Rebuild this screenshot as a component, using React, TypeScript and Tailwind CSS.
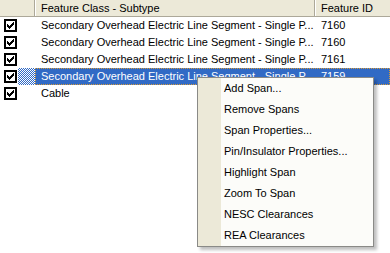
import React from 'react';

interface Row {
  id: string;
  name: string;
  featureId: string;
  selected?: boolean;
}

const rows: Row[] = [
  { id: '1', name: 'Secondary Overhead Electric Line Segment - Single P...', featureId: '7160' },
  { id: '2', name: 'Secondary Overhead Electric Line Segment - Single P...', featureId: '7160' },
  { id: '3', name: 'Secondary Overhead Electric Line Segment - Single P...', featureId: '7161' },
  { id: '4', name: 'Secondary Overhead Electric Line Segment - Single P...', featureId: '7159', selected: true },
  { id: '5', name: 'Cable', featureId: '' }
];

const menuItems = [
  'Add Span...',
  'Remove Spans',
  'Span Properties...',
  'Pin/Insulator Properties...',
  'Highlight Span',
  'Zoom To Span',
  'NESC Clearances',
  'REA Clearances'
];

// classic 13x13 list checkbox
const CheckBox = () => <svg width="13" height="13" viewBox="0 0 13 13" shapeRendering="crispEdges">
    <rect x="0" y="0" width="13" height="13" fill="#000" />
    <rect x="2" y="2" width="9" height="9" fill="#fff" />
    <rect x="9" y="3" width="1" height="1" fill="#000" />
    <rect x="8" y="4" width="2" height="1" fill="#000" />
    <rect x="3" y="5" width="1" height="1" fill="#000" />
    <rect x="7" y="5" width="3" height="1" fill="#000" />
    <rect x="3" y="6" width="2" height="1" fill="#000" />
    <rect x="6" y="6" width="3" height="1" fill="#000" />
    <rect x="3" y="7" width="5" height="1" fill="#000" />
    <rect x="4" y="8" width="3" height="1" fill="#000" />
    <rect x="5" y="9" width="1" height="1" fill="#000" />
  </svg>;

const App = () => {
  return <div className="relative w-[390px] h-[253px] bg-white overflow-hidden text-[11px] text-black" style={{ fontFamily: '"Liberation Sans", Arial, sans-serif' }}>
      {/* header */}
      <div className="flex h-[17px] bg-[#ece9d8] border-b border-[#aca899]">
        <div className="w-[35px] border-r border-[#aca899] shadow-[1px_0_0_#fff]" />
        <div className="w-[280px] pl-[6px] flex items-center border-r border-[#aca899] shadow-[1px_0_0_#fff]">
          Feature Class - Subtype
        </div>
        <div className="flex-1 pl-[6px] flex items-center">Feature ID</div>
      </div>

      {/* rows */}
      {rows.map(row => <div key={row.id} className="flex h-[17px] items-center">
          <div className="w-[18px] h-full flex items-center pl-[4px]">
            <CheckBox />
          </div>
          {row.selected ? <>
              <div className="w-[17px] h-full bg-[repeating-conic-gradient(#316ac5_0_25%,#fff_0_50%)] bg-[length:2px_2px]" />
              <div className="flex-1 h-full flex items-center bg-[#316ac5] text-white border border-dotted border-[#d69a3a]">
                <div className="w-[279px] pl-[5px] whitespace-nowrap overflow-hidden">{row.name}</div>
                <div className="pl-[6px]">{row.featureId}</div>
              </div>
            </> : <>
              <div className="w-[17px]" />
              <div className="w-[280px] pl-[6px] whitespace-nowrap overflow-hidden">{row.name}</div>
              <div className="pl-[6px]">{row.featureId}</div>
            </>}
        </div>)}

      {/* context menu */}
      <div className="absolute left-[197px] top-[77px] w-[177px] flex bg-[#fcfcf9] border border-[#8a8a87] shadow-[3px_3px_3px_rgba(0,0,0,0.25)]">
        <div className="w-[23px] bg-[#ece9d8]" />
        <div className="flex-1 flex flex-col">
          {menuItems.map(item => <div key={item} className="h-[21px] flex items-center pl-[3px] whitespace-nowrap">
              {item}
            </div>)}
        </div>
      </div>
    </div>;
};

export default App;
